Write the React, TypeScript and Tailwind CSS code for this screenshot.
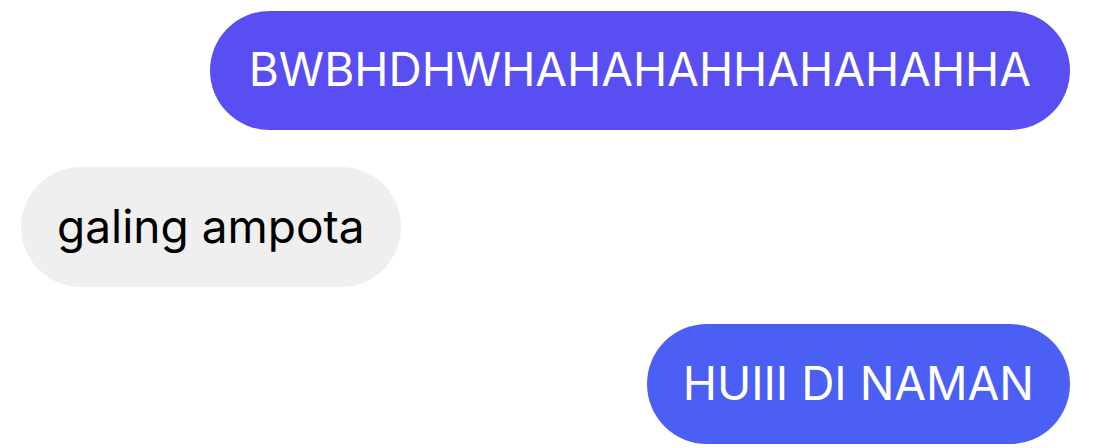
export default function App() {
  return (
    <div className="flex h-[448px] w-[1094px] flex-col gap-[37px] bg-white pl-[21px] pr-[24px] pt-[11px] font-['Inter',sans-serif]">
      <div className="flex justify-end">
        <div className="flex h-[119px] items-center rounded-full bg-[#584ef2] px-[39px] pb-[2px] text-[46px] text-white">
          BWBHDHWHAHAHAHHAHAHAHHA
        </div>
      </div>
      <div className="flex justify-start">
        <div className="flex h-[120px] items-center rounded-full bg-[#efefef] px-[36px] pb-[2px] text-[46px] text-black">
          galing ampota
        </div>
      </div>
      <div className="flex justify-end">
        <div className="flex h-[120px] items-center rounded-full bg-[#4b5ff5] px-[36px] pb-[2px] text-[46px] text-white">
          HUIII DI NAMAN
        </div>
      </div>
    </div>
  );
}
